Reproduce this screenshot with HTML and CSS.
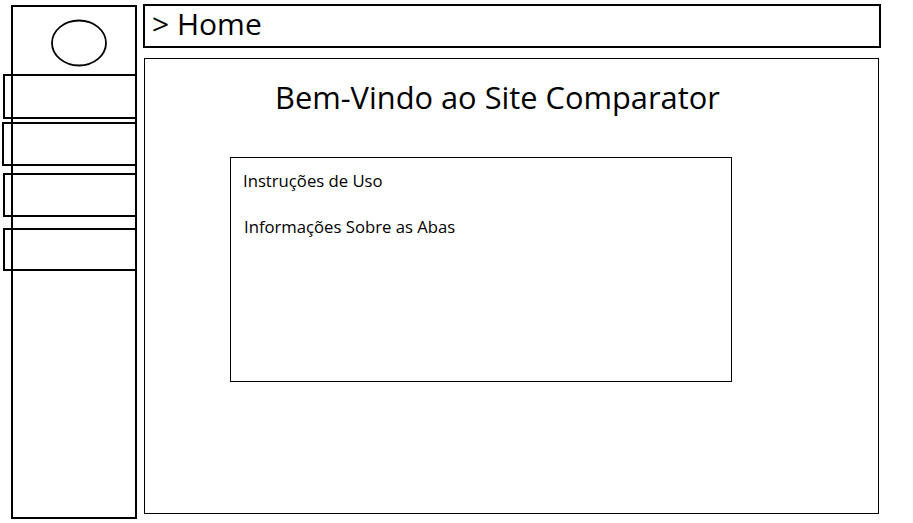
FILE: index.html
```html
<!DOCTYPE html>
<html lang="pt">
<head>
<meta charset="utf-8">
<title>Site Comparator</title>
<link rel="stylesheet" href="styles.css">
</head>
<body>
<div class="page">
  <aside class="sidebar">
    <svg class="logo" width="58" height="48" viewBox="0 0 58 48">
      <ellipse cx="29" cy="24" rx="27" ry="22.5" fill="none" stroke="#000" stroke-width="1.8"/>
    </svg>
    <div class="menu-item menu-item--first"></div>
    <div class="menu-item menu-item--second"></div>
    <div class="menu-item menu-item--third"></div>
    <div class="menu-item menu-item--fourth"></div>
  </aside>
  <main class="main">
    <header class="breadcrumb">&gt; Home</header>
    <section class="content">
      <h1 class="title">Bem-Vindo ao Site Comparator</h1>
      <div class="info-box">
        <p class="info-line">Instruções de Uso</p>
        <p class="info-line info-line--second">Informações Sobre as Abas</p>
      </div>
    </section>
  </main>
</div>
</body>
</html>
```
FILE: styles.css
```css
* { box-sizing: border-box; }
html, body { margin: 0; padding: 0; background: #fff; }
body {
  font-family: "Open Sans", "Noto Sans", sans-serif;
  color: #000;
  width: 913px;
  height: 523px;
  overflow: hidden;
}
.page {
  display: flex;
  align-items: flex-start;
  padding-left: 11px;
}
.sidebar {
  margin-top: 5px;
  width: 126px;
  height: 514px;
  border: 2px solid #000;
  display: flex;
  flex-direction: column;
}
.logo {
  display: block;
  margin-top: 12px;
  margin-left: 37px;
  flex: none;
}
.menu-item {
  width: 134px;
  margin-left: -10px;
  border: 2px solid #000;
  flex: none;
}
.menu-item--first { margin-top: 7px; height: 45px; }
.menu-item--second { margin-top: 3px; height: 44px; margin-left: -11px; width: 135px; }
.menu-item--third { margin-top: 7px; height: 44px; }
.menu-item--fourth { margin-top: 11px; height: 43px; }

.main {
  margin-left: 6px;
  margin-top: 4px;
  width: 738px;
  display: flex;
  flex-direction: column;
}
.breadcrumb {
  height: 44px;
  border: 2px solid #000;
  padding-left: 7px;
  font-size: 30px;
  line-height: 36px;
}
.content {
  margin-top: 10px;
  margin-left: 1px;
  width: 735px;
  height: 456px;
  border: 1px solid #000;
}
.title {
  margin: 19px 0 0 130px;
  font-weight: normal;
  font-size: 30.8px;
  line-height: 38px;
}
.info-box {
  margin: 41px 0 0 85px;
  width: 502px;
  height: 225px;
  border: 1px solid #000;
  padding: 12px 0 0 12px;
}
.info-line {
  margin: 0;
  font-size: 16.7px;
  line-height: 22px;
}
.info-line--second {
  margin-top: 24px;
  margin-left: 1px;
}
```
